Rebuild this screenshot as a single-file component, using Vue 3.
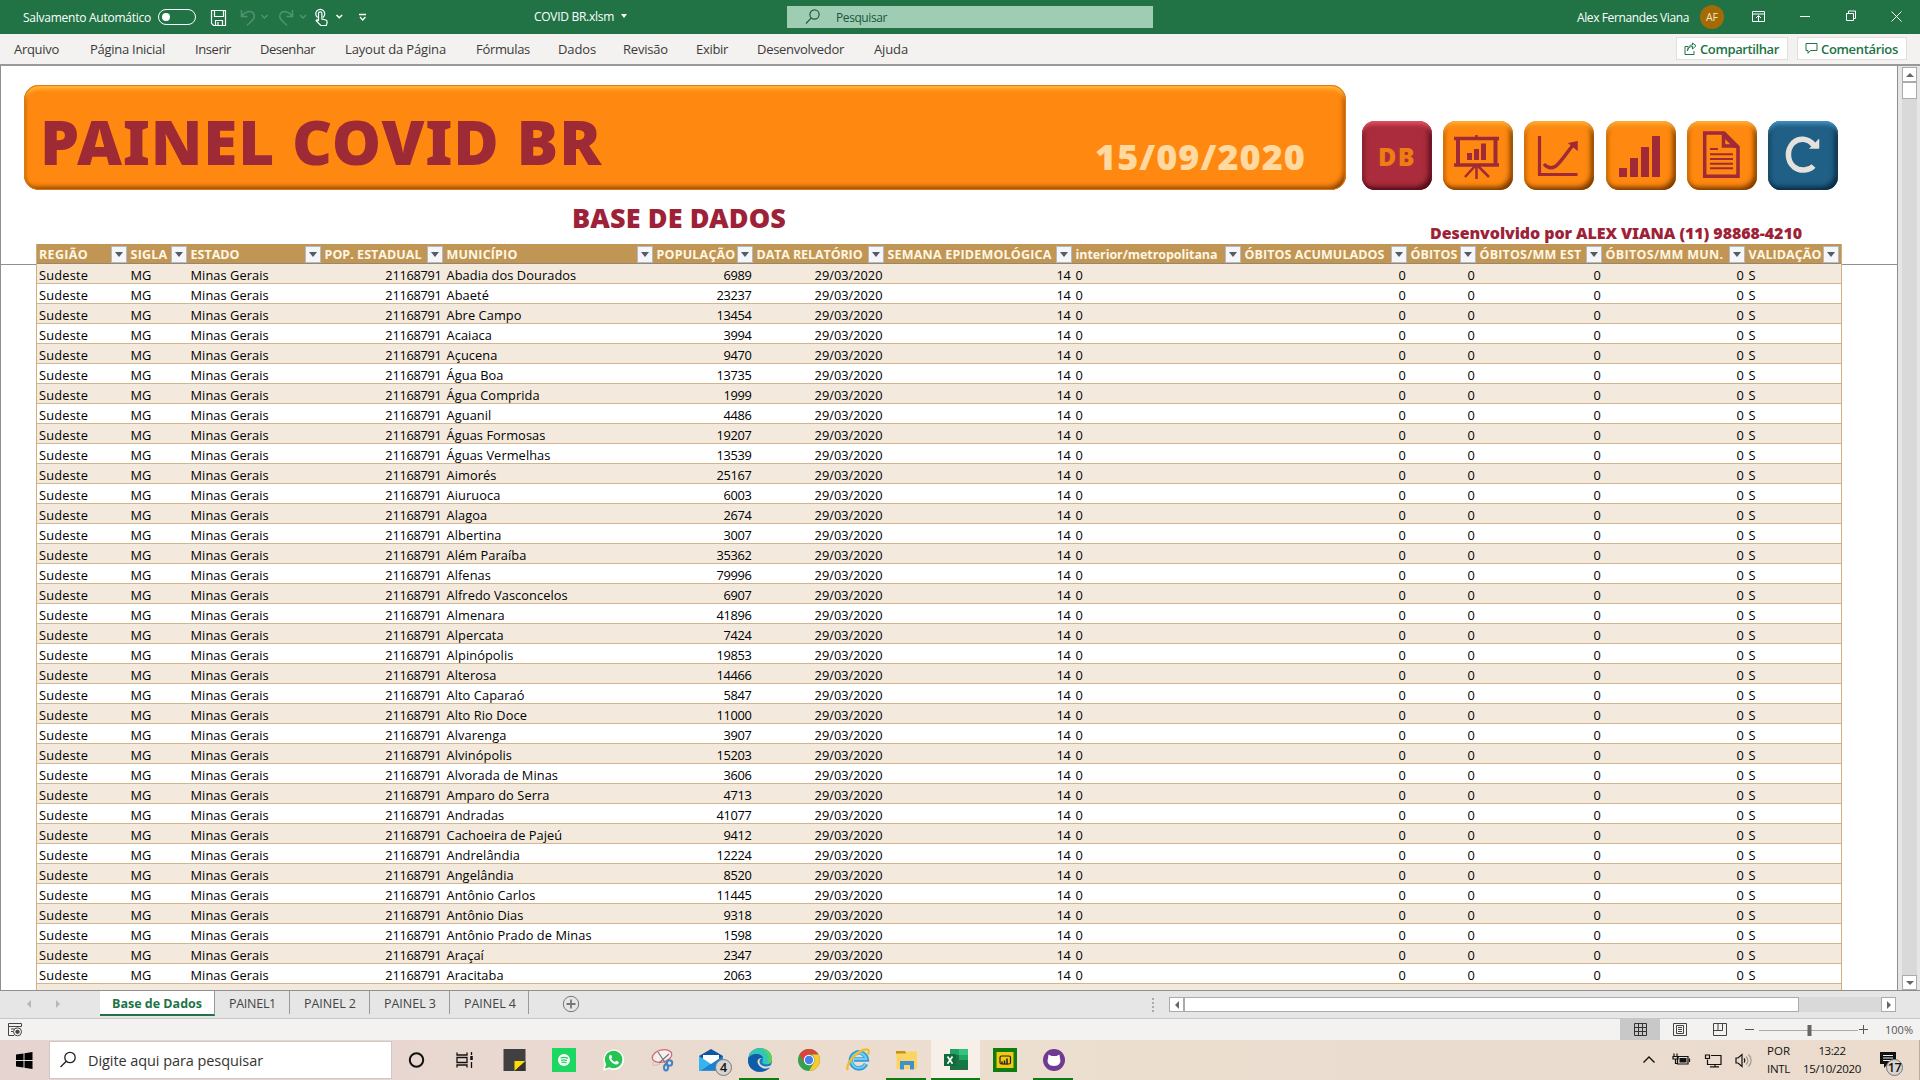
<script setup>
const vFit = {
  mounted(el, { value }) {
    el.style.letterSpacing = '0px'
    const extra = value - el.getBoundingClientRect().width
    el.style.letterSpacing = extra / el.textContent.length + 'px'
  }
}

const menu = [
  { t: 'Arquivo', w: 45, slot: 76 },
  { t: 'Página Inicial', w: 75, slot: 105 },
  { t: 'Inserir', w: 36, slot: 65 },
  { t: 'Desenhar', w: 55, slot: 85 },
  { t: 'Layout da Página', w: 101, slot: 131 },
  { t: 'Fórmulas', w: 54, slot: 82 },
  { t: 'Dados', w: 38, slot: 65 },
  { t: 'Revisão', w: 45, slot: 73 },
  { t: 'Exibir', w: 32, slot: 61 },
  { t: 'Desenvolvedor', w: 87, slot: 117 },
  { t: 'Ajuda', w: 34, slot: 40 }
]

const columns = [
  { t: 'REGIÃO', w: 92, tw: 49 },
  { t: 'SIGLA', w: 60, tw: 37 },
  { t: 'ESTADO', w: 134, tw: 49 },
  { t: 'POP. ESTADUAL', w: 122, tw: 97 },
  { t: 'MUNICÍPIO', w: 210, tw: 71 },
  { t: 'POPULAÇÃO', w: 100, tw: 79 },
  { t: 'DATA RELATÓRIO', w: 131, tw: 106 },
  { t: 'SEMANA EPIDEMOLÓGICA', w: 188, tw: 164 },
  { t: 'interior/metropolitana', w: 169, tw: 142 },
  { t: 'ÓBITOS ACUMULADOS', w: 166, tw: 140 },
  { t: 'ÓBITOS', w: 69, tw: 47 },
  { t: 'ÓBITOS/MM EST', w: 126, tw: 102 },
  { t: 'ÓBITOS/MM MUN.', w: 143, tw: 118 },
  { t: 'VALIDAÇÃO', w: 95, tw: 73 }
]

const cities = [
  ['Abadia dos Dourados', 6989], ['Abaeté', 23237], ['Abre Campo', 13454], ['Acaiaca', 3994],
  ['Açucena', 9470], ['Água Boa', 13735], ['Água Comprida', 1999], ['Aguanil', 4486],
  ['Águas Formosas', 19207], ['Águas Vermelhas', 13539], ['Aimorés', 25167], ['Aiuruoca', 6003],
  ['Alagoa', 2674], ['Albertina', 3007], ['Além Paraíba', 35362], ['Alfenas', 79996],
  ['Alfredo Vasconcelos', 6907], ['Almenara', 41896], ['Alpercata', 7424], ['Alpinópolis', 19853],
  ['Alterosa', 14466], ['Alto Caparaó', 5847], ['Alto Rio Doce', 11000], ['Alvarenga', 3907],
  ['Alvinópolis', 15203], ['Alvorada de Minas', 3606], ['Amparo do Serra', 4713], ['Andradas', 41077],
  ['Cachoeira de Pajeú', 9412], ['Andrelândia', 12224], ['Angelândia', 8520], ['Antônio Carlos', 11445],
  ['Antônio Dias', 9318], ['Antônio Prado de Minas', 1598], ['Araçaí', 2347], ['Aracitaba', 2063]
]

const rows = cities.map(([name, pop]) => [
  'Sudeste', 'MG', 'Minas Gerais', '21168791', name, pop, '29/03/2020', '14', '0', '0', '0', '0', '0', 'S'
])
rows.push(columns.map(() => ''))
const numeric = [3, 5, 6, 7, 9, 10, 11, 12]

const sheets = [
  { t: 'PAINEL1', w: 47, slot: 75 },
  { t: 'PAINEL 2', w: 52, slot: 80 },
  { t: 'PAINEL 3', w: 52, slot: 80 },
  { t: 'PAINEL 4', w: 52, slot: 79 }
]
</script>

<template>
  <div class="screen">
    <header class="titlebar">
      <div class="autosave"><span v-fit="128">Salvamento Automático</span></div>
      <span class="toggle"><i></i></span>
      <svg class="quick" width="170" height="34" viewBox="0 0 170 34" fill="none" stroke="#fff" stroke-width="1.2">
        <path d="M12.5 10.5h14v15h-12l-2-2zM15.5 10.5v6h9v-6M16.500 25.500v-5h7v5M19 22v3" />
        <g stroke="#4f9370" stroke-width="1.5">
          <path d="M42.500 10v6.500h6M43 16c3-5 10-6 12-1.500s-4 7.500-7 11" />
          <path d="M62.500 15l3 3 3-3" />
          <path d="M93.500 10v6.500h-6M93 16c-3-5-10-6-12-1.500s4 7.500 7 11" />
          <path d="M101 15l3 3 3-3" />
        </g>
        <path d="M118.500 17.500a4.500 4.500 0 1 1 5.500 0M119.500 21v-7.500a1.700 1.700 0 0 1 3.400 0v5.500l4 1c1.400.5 1.300 1.500 1.200 2.500l-.8 3h-5.500l-4.500-4.500c-.5-1.500 1-1.700 2.200 0" />
        <path d="M137.500 15l2.800 2.800 2.800-2.800" stroke-width="1.500" />
        <path d="M160 14.500h7M161 17l2.700 3 2.700-3" stroke-width="1.300" />
      </svg>
      <div class="doc"><span v-fit="80">COVID BR.xlsm</span><i class="caret"></i></div>
      <div class="search">
        <svg width="16" height="16" viewBox="0 0 16 16" fill="none" stroke="#1b5e3a" stroke-width="1.200"><circle cx="9.500" cy="5.500" r="4.600" /><path d="M6.300 8.800L1 14.500" /></svg>
        <span v-fit="51">Pesquisar</span>
      </div>
      <div class="user"><span v-fit="112">Alex Fernandes Viana</span></div>
      <span class="avatar">AF</span>
      <svg class="winbtns" width="196" height="34" viewBox="0 0 196 34" fill="none" stroke="#fff">
        <path d="M28.500 11.500h12v10h-12zM28.500 14h12M34.500 21v-5M32 18l2.500-2.500L37 18" />
        <path d="M76 16.500h10" />
        <path d="M122.500 13.500h7v7h-7zM124.500 13v-2h7v7.500h-2" />
        <path d="M167.500 11.500l10 10M177.500 11.500l-10 10" />
      </svg>
    </header>

    <nav class="menu">
      <div v-for="m in menu" :key="m.t" class="mitem" :style="{ width: m.slot + 'px' }"><span v-fit="m.w">{{ m.t }}</span></div>
      <div class="mbtns">
        <div class="mbtn">
          <svg width="13" height="13" viewBox="0 0 13 13" fill="none" stroke="#217346"><path d="M4 4.500H1v8h9V9M3.500 9c.5-3 2-4.500 5-4.500V7L12 3.700 8.500 1v2C5 3 3.500 5.500 3.500 9z" /></svg>
          <span v-fit="79">Compartilhar</span>
        </div>
        <div class="mbtn">
          <svg width="13" height="13" viewBox="0 0 13 13" fill="none" stroke="#217346"><path d="M1 1.500h11v7H5.500L3 11.300V8.500H1z" /></svg>
          <span v-fit="77">Comentários</span>
        </div>
      </div>
    </nav>

    <main class="work">
      <section class="sheet">
        <div class="top">
          <div class="banner">
            <span class="h1"><span v-fit="562">PAINEL COVID BR</span></span>
            <span class="date"><span v-fit="211">15/09/2020</span></span>
          </div>
          <div class="actions">
            <div class="act red"><span v-fit="38">DB</span></div>
            <div class="act">
              <svg width="70" height="69" viewBox="0 0 70 69" fill="none" stroke="#a02a36" stroke-width="3">
                <path d="M11 17.500h45M11 44h45" stroke-width="3.500" /><path d="M15 17v27M52.500 17v27" stroke-width="4" />
                <path d="M33.500 14v3M33.500 44v14" stroke-width="2.500" /><path d="M32 45L22 56M35 45l11 11" stroke-width="2.500" />
                <path d="M24 32h5v7h-5zM31 28h5v11h-5zM38 22.500h5V39h-5z" fill="#a02a36" stroke="none" />
              </svg>
            </div>
            <div class="act">
              <svg width="70" height="69" viewBox="0 0 70 69" fill="none" stroke="#a02a36" stroke-width="3.500">
                <path d="M15.500 15v39M14 53.500h39.500" stroke-width="3.200" /><path d="M20 43c4 5 10 5 14 0 6-6 10-13 15-19" /><path d="M45.500 22.500L53 21v7.500z" fill="#a02a36" stroke-width="1.500" />
              </svg>
            </div>
            <div class="act">
              <svg width="70" height="69" viewBox="0 0 70 69" fill="#a02a36"><path d="M13 47h8v9h-8zM24 37h8v19h-8zM35 26h8v30h-8zM46 15h8v41h-8z" /></svg>
            </div>
            <div class="act">
              <svg width="70" height="69" viewBox="0 0 70 69" fill="none" stroke="#a02a36" stroke-width="3.500">
                <path d="M17.700 12H37l14 14v29.300H17.700zM36.500 12v13h13" /><path d="M36 11l16 16h-5L36 16z" fill="#a02a36" stroke="none" />
                <path d="M23 28h8M23 33.200h23M23 38h23M23 42.700h23M23 47.200h23" stroke-width="2" />
              </svg>
            </div>
            <div class="act blue">
              <svg width="70" height="69" viewBox="0 0 70 69" fill="none" stroke="#e5e1dd" stroke-width="5.500">
                <path d="M45.500 24C40 17 31 16.500 25 22c-6.500 7-6 18 1 24 6 4.500 15 4 19.500-1" /><path d="M51 18v9.500H41.500z" fill="#e5e1dd" stroke-width="0.500" />
              </svg>
            </div>
          </div>
        </div>
        <div class="captions">
          <div class="base"><span v-fit="214">BASE DE DADOS</span></div>
          <div class="dev"><span v-fit="372">Desenvolvido por ALEX VIANA (11) 98868-4210</span></div>
        </div>
        <div class="grid">
          <table>
            <colgroup><col v-for="c in columns" :key="c.t" :style="{ width: c.w + 'px' }" /></colgroup>
            <thead>
              <tr>
                <th v-for="c in columns" :key="c.t"><div class="hcell"><span v-fit="c.tw">{{ c.t }}</span><i class="filter"></i></div></th>
              </tr>
            </thead>
            <tbody>
              <tr v-for="(r, i) in rows" :key="i">
                <td v-for="(v, j) in r" :key="j" :class="{ num: numeric.includes(j), day: j === 6, wide: j === 0 }"><div class="cell">{{ v }}</div></td>
              </tr>
            </tbody>
          </table>
        </div>
      </section>
      <aside class="vscroll"><i class="sb"><b class="up"></b></i><i class="vthumb"></i><i class="sb last"><b class="down"></b></i></aside>
    </main>

    <section class="tabs">
      <div class="tabnav"><b class="left pale"></b><b class="right pale"></b></div>
      <div class="tab on"><span v-fit="90">Base de Dados</span></div>
      <div v-for="s in sheets" :key="s.t" class="tab" :style="{ width: s.slot + 'px' }"><span v-fit="s.w">{{ s.t }}</span></div>
      <svg class="plus" width="18" height="18" viewBox="0 0 18 18" fill="none" stroke="#777"><circle cx="9" cy="9" r="7.700" /><path d="M4.500 9h9M9 4.500v9" stroke-width="1.800" /></svg>
      <div class="hscroll"><span class="dots"><u></u><u></u><u></u><u></u></span><i class="sb"><b class="left"></b></i><i class="hthumb"></i><i class="htrack"></i><i class="sb"><b class="right"></b></i></div>
    </section>

    <section class="status">
      <svg class="macro" width="15" height="14" viewBox="0 0 15 14" fill="none" stroke="#444"><path d="M6 12.500H.5v-12h13v3M.5 3.500h13M3 6h3M3 8.500h2" /><circle cx="9.500" cy="8.800" r="4" /><circle cx="9.500" cy="8.800" r="1.700" fill="#444" /></svg>
      <div class="views">
        <span class="view sel"><svg width="13" height="13" viewBox="0 0 13 13" fill="none" stroke="#333"><path d="M.5.500h12v12H.500zM4.500.500v12M8.500.500v12M.5 4.500h12M.5 8.500h12" /></svg></span>
        <span class="view"><svg width="14" height="13" viewBox="0 0 14 13" fill="none" stroke="#444"><path d="M.5.500h13v12H.500zM3.500 2.500h7v8h-7zM5 4.500h4M5 6.500h4M5 8.500h4" /></svg></span>
        <span class="view"><svg width="14" height="13" viewBox="0 0 14 13" fill="none" stroke="#444"><path d="M.5.500h13v12H.500zM5 .5v7h4.500v-7M.5 7.500H5" /></svg></span>
        <svg class="zoomer" width="130" height="20" viewBox="0 0 130 20" fill="none" stroke="#555"><path d="M5 9.500h9M128 9.500h-9M123.500 5v9" /><path d="M19 10.500h99" stroke="#aaa" /><path d="M69.500 5v11" stroke-width="4" stroke="#666" /></svg>
        <span class="pct"><span v-fit="28">100%</span></span>
      </div>
    </section>

    <footer class="taskbar">
      <div class="start"><svg width="18" height="17" viewBox="0 0 18 17"><path d="M0 2.500l7.500-1V8H0zM8.500 1.300L16.500 0v8h-8zM0 9h7.500v6.500L0 14.500zM8.500 9h8v8l-8-1.300z" /></svg></div>
      <div class="tsearch">
        <svg width="18" height="18" viewBox="0 0 18 18" fill="none" stroke="#222" stroke-width="1.300"><circle cx="11" cy="6.500" r="5.200" /><path d="M7.300 10.300L1.500 16" /></svg>
        <span v-fit="175">Digite aqui para pesquisar</span>
      </div>
      <div class="apps">
        <div class="app"><svg viewBox="0 0 26 26"><circle cx="12.500" cy="13" r="6.700" fill="none" stroke="#111" stroke-width="2" /></svg></div>
        <div class="app"><svg viewBox="0 0 26 26" fill="none" stroke="#111" stroke-width="1.300"><path d="M4 5.500V8h10V5.500M4 20.500V18h10v2.500M4 10.500h10v5H4zM18.500 5v3M18.500 15v6" /><path d="M18.500 9v4" stroke-width="2.500" /></svg></div>
        <div class="app"><svg viewBox="0 0 26 26"><path d="M1.500 2h22v22h-22z" fill="#404040" /><path d="M12.500 14h11l-11 10z" fill="#fd0" /><path d="M23.500 14v10h-11z" fill="#333" /></svg></div>
        <div class="app"><svg viewBox="0 0 26 26"><path d="M1 1h24v24H1z" fill="#1ed760" /><circle cx="13" cy="13" r="6" fill="#fff" /><path d="M9.500 11c2.500-1 5-.8 7.500.4M10 13.300c2-.7 4-.5 6 .4M10.500 15.400c2-.5 3.300-.4 5 .4" fill="none" stroke="#1ed760" stroke-width="1.300" /></svg></div>
        <div class="app"><svg viewBox="0 0 26 26"><path d="M3 23.500l1.500-6A10.300 10.300 0 1 1 9 22z" fill="#fff" /><path d="M5 21.500l1.200-4.200A8.800 8.800 0 1 1 9.500 20.300z" fill="#25c454" /><path d="M10 8c-2 2-.5 5 1.500 7s5 3.500 7 1.500c.6-1 .4-1.500-.5-2l-1.800-.8-1.400 1.300c-2-.8-3-2-3.600-3.500l1-1.300-1-2.200z" fill="#fff" /></svg></div>
        <div class="app"><svg viewBox="0 0 26 26"><ellipse cx="13" cy="9" rx="10" ry="6" transform="rotate(-15 13 9)" fill="#f7eef0" stroke="#d66a73" stroke-width="1.300" /><path d="M5 15c-5 4 2 4 6 2" stroke="#ddb6b6" fill="none" /><path d="M9 5l8 12M20 7L10 16" stroke="#777" stroke-width="1.200" /><circle cx="20.500" cy="16" r="2.700" fill="none" stroke="#3e84c6" stroke-width="2" /><ellipse cx="17" cy="20.500" rx="2" ry="3" fill="none" stroke="#3e84c6" stroke-width="2" /></svg></div>
        <div class="app"><svg viewBox="0 0 26 26"><path d="M1 9l12-7 12 7v14.500H1z" fill="#0b57a4" /><path d="M5 8h16v9H5z" fill="#fff" /><path d="M1 9l12 8-9 6.500H1z" fill="#37b4ee" /><path d="M25 9l-12 8-10 6.500h22z" fill="#1683d4" /></svg><span class="badge">4</span></div>
        <div class="app run"><svg viewBox="0 0 26 26"><circle cx="13" cy="13" r="12" fill="#1579cb" /><path d="M1.500 11C3 4 8 1 13 1c7 0 12 5 12 11 0 4-4 6-8 5-3-1-1-2-1-5 0-5-8-8-14.500-1z" fill="#36c5b5" /><path d="M1 13c1-7 13-8 15-2-6-1-7 5-3 9 3 3 7 2.500 10.500 0C18 27 1 27 1 13z" fill="#0f5ca8" /><path d="M16 11c-4 0-5 5-1 7.500 3 2 6 1 9-.5l-1 2.500c-4 2-9 1-11.500-3S11.500 10.500 16 11z" fill="#ebddd2" /><path d="M13 1c7 0 12 5 12 11 0 3-2 5-5 5.200C24 11 20 3 13 1z" fill="#5ad45a" /></svg></div>
        <div class="app"><svg viewBox="0 0 26 26"><circle cx="13" cy="13" r="11" fill="#34a050" /><path d="M3.500 7.500A11 11 0 0 1 22.500 7.500H13L8 15.500z" fill="#d9453a" /><path d="M22.500 7.500A11 11 0 0 1 13 24l5-8.500c1-2.500.5-6-2.500-8z" fill="#fbc82d" /><circle cx="13" cy="13" r="5.200" fill="#fff" /><circle cx="13" cy="13" r="4.200" fill="#4381ed" /></svg></div>
        <div class="app"><svg viewBox="0 0 26 26" fill="none"><path d="M21 17a8 8 0 1 1 .8-4.500H9" stroke="#2d9fdd" stroke-width="4.500" /><path d="M20.500 17a7.500 7.500 0 1 1 .8-5H9" stroke="#75ccf2" stroke-width="1.800" /><path d="M3 23C-1 19 12 2 22 2.500c2.500.5 2 3 1 5" stroke="#f0bf2e" stroke-width="2.300" /></svg></div>
        <div class="app run"><svg viewBox="0 0 26 26"><path d="M2 4h9l2 3h-11z" fill="#c9930f" /><path d="M2.500 6.500h9l2-2H23V22H2.500z" fill="#fcd462" /><path d="M6 14h14v8.500h-4V18h-6v4.500H6z" fill="#3e91d0" /></svg></div>
        <div class="app run active"><svg viewBox="0 0 26 26"><path d="M7 2h18v21H7z" fill="#1e7145" /><path d="M7 2h9v6H7z" fill="#21a366" /><path d="M16 2h9v6h-9z" fill="#33c481" /><path d="M16 8h9v5h-9z" fill="#24a567" /><path d="M16 13h9v5h-9z" fill="#107c41" /><path d="M1 7h12v12H1z" fill="#0f6b39" /><path d="M4.500 9.500l5 7.200M9.500 9.500l-5 7.200" stroke="#fff" stroke-width="1.700" /></svg></div>
        <div class="app"><svg viewBox="0 0 26 26"><path d="M1 1h24v24H1z" fill="#107c10" /><path d="M4.500 5h17v16h-17z" fill="#f2c811" /><rect x="8" y="9" width="10.500" height="8" rx="1.500" fill="none" stroke="#222" stroke-width="1.200" /><path d="M10 17v-2.500M12.500 17.500v-4M15 17.500v-6" stroke="#222" stroke-width="1.500" /></svg></div>
        <div class="app run"><svg viewBox="0 0 26 26"><circle cx="13" cy="13" r="11" fill="#6e3a94" /><path d="M7.500 7.500l3 1.500h5l3-1.500.5 4c1.500 4-1 7.500-6 7.500s-7.500-3.500-6-7.500z" fill="#fff" /></svg></div>
      </div>
      <div class="tray">
        <svg width="120" height="40" viewBox="0 0 120 40" fill="none" stroke="#111" stroke-width="1.200">
          <path d="M5.500 22.500l5.500-5.500 5.500 5.500" stroke-width="1.400" />
          <path d="M39.500 16.500h10.500v7.500H39.500z" /><path d="M41.500 18h7v4.500h-7z" fill="#111" stroke="none" /><path d="M51.500 18.500v3.500M36 13.500v2.500M39 13.500v2.500M35 16.500h5v2.500h-5zM37.500 19v4.500h2" />
          <path d="M73 15.500h10v9H69.500v-5M67.500 15h4v3.500h-4zM77 25v2M72 26.800h9" />
          <path d="M98 18h2l4-3.500v12l-4-3.500h-2z" /><path d="M106 18.500c1 1 1 3 0 4" /><path d="M108 16.500c2.500 2 2.500 6 0 8M110.500 14.500c3.500 3.500 3.500 8.500 0 12" stroke="#a09890" />
        </svg>
        <div class="lang"><span v-fit="23">POR</span><span v-fit="23">INTL</span></div>
        <div class="clock"><span v-fit="27">13:22</span><span v-fit="58">15/10/2020</span></div>
        <div class="notif"><svg width="18" height="18" viewBox="0 0 18 18"><path d="M0 0h16v12H8l-4 4v-4H0z" fill="#111" /><path d="M3 3.500h10M3 6h10M3 8.500h10" stroke="#eee" /></svg><span class="badge">17</span></div>
      </div>
    </footer>
  </div>
</template>

<style>
body { margin: 0; overflow: hidden; }
</style>

<style scoped>
.screen { width: 1920px; height: 1080px; display: flex; flex-direction: column; font-family: "Open Sans", "Noto Sans", sans-serif; font-size: 12px; background: #fff; overflow: hidden; white-space: nowrap; }
.screen * { box-sizing: border-box; }
svg { display: block; flex: none; }
span { display: inline-block; }
.titlebar { height: 34px; flex: none; display: flex; align-items: center; background: #217346; color: #fff; }
.autosave { width: 158px; padding-left: 23px; }
.toggle { width: 38px; height: 16px; border: 1px solid #fff; border-radius: 8px; display: flex; align-items: center; padding-left: 3px; }
.toggle i { width: 8px; height: 8px; border-radius: 50%; background: #fff; }
.quick { margin-left: 3px; }
.doc { width: 253px; margin-left: 165px; display: flex; align-items: center; gap: 7px; padding-bottom: 2px; }
.caret { border: 3px solid transparent; border-top: 4px solid #fff; border-bottom: 0; }
.search { width: 366px; height: 22px; background: #9fcdb4; color: #16593a; display: flex; align-items: center; padding-left: 18px; gap: 15px; }
.user { width: 547px; display: flex; justify-content: flex-end; padding-right: 11px; }
.avatar { width: 24px; height: 24px; border-radius: 50%; background: #a36a06; color: #f6e7c7; font-size: 10.500px; line-height: 24px; text-align: center; }
.menu { height: 32px; flex: none; display: flex; align-items: center; padding: 0 13px 2px 14px; background: #f3f2f1; border-bottom: 2px solid #999; color: #3b3a39; font-size: 13px; }
.mitem { flex: none; padding-top: 2px; }
.mbtns { margin-left: auto; display: flex; gap: 9px; padding-top: 1px; }
.mbtn { height: 23px; width: 112px; background: #fff; border: 1px solid #e1dfdd; display: flex; align-items: center; padding-left: 7px; gap: 3px; color: #217346; font-weight: 600; }
.mbtn + .mbtn { width: 110px; }
.work { height: 924px; flex: none; display: flex; background: #e6e6e6; }
.sheet { width: 1898px; height: 924px; overflow: hidden; background: #fff; border-left: 1px solid #8f8f8f; border-right: 1px solid #8f8f8f; }
.top { display: flex; gap: 16px; align-items: flex-end; padding: 19px 0 0 23px; }
.banner { width: 1322px; height: 105px; border-radius: 15px; background: #ff8810; display: flex; justify-content: space-between; box-shadow: inset 0 0 0 1px #e07a10, inset 0 5px 4px -1px #ffb83c, inset -4px -5px 5px -2px #8a4300, inset 4px 0 3px -2px #b86000; }
.h1, .date, .red, .captions { font-family: "Noto Sans", "Open Sans", sans-serif; font-weight: 900; }
.h1 { font-size: 62px; line-height: 86px; color: #9e2a35; padding: 13px 0 0 16px; }
.date { font-size: 36px; line-height: 50px; color: #ffd9a0; padding: 47px 40px 0 0; }
.actions { display: flex; gap: 11.200px; }
.act { width: 70px; height: 69px; border-radius: 13px; background: #ff8810; box-shadow: inset 0 5px 4px -2px #ffb03a, inset -4px -4px 5px -1px #7a3b00, inset 4px 0 4px -2px #b86000; }
.red { background: #ab2c3c; color: #ee7d13; font-size: 25px; line-height: 34px; padding: 18px 0 0 16px; box-shadow: inset 0 5px 4px -2px #e85266, inset -4px -4px 5px -1px #4f0c18, inset 4px 0 4px -2px #751825; }
.blue { background: #205f86; box-shadow: inset 0 5px 4px -2px #4692c4, inset -4px -4px 5px -1px #092a42, inset 4px 0 4px -2px #123f5c; }
.captions { height: 54px; display: flex; justify-content: space-between; color: #9e2237; }
.base { padding: 10px 0 0 571px; font-size: 27px; line-height: 36px; }
.dev { padding: 32px 95px 0 0; font-size: 16px; line-height: 22px; }
.grid { background: linear-gradient(#909090, #909090) 0 20px / 100% 1px no-repeat; padding-left: 35px; height: 746px; overflow: hidden; }
table { table-layout: fixed; width: 1805px; border-collapse: collapse; border-spacing: 0; font-size: 12.800px; color: #000; border-right: 1px solid #cfae7f; border-left: 1px solid #cfae7f; }
th, td { padding: 0; height: 20px; text-align: left; font-weight: normal; }
.hcell { height: 20px; line-height: 18px; display: flex; align-items: center; justify-content: space-between; padding: 0 2px 0 2px; background: #c19655; color: #fff6e4; font-weight: 700; font-size: 12.500px; border-bottom: 1px solid #96876f; }
.hcell span { padding-top: 2px; }
.filter { width: 16px; height: 17px; margin-top: 1px; flex: none; background: #f4f6f9; border: 1px solid #b5b9c2; display: flex; align-items: center; justify-content: center; }
.filter::after { content: ""; border: 4px solid transparent; border-top: 5px solid #555b63; border-bottom: 0; }
.cell { height: 20px; line-height: 19px; border-bottom: 1px solid #d4b68c; padding: 2px 3px 0 2px; letter-spacing: 0.080px; }
.num .cell { text-align: right; letter-spacing: -0.300px; }
.day .cell { letter-spacing: 0; }
.wide .cell { letter-spacing: 0.200px; }
tbody tr:nth-child(odd) { background: #f3eadd; }
.vscroll { width: 15px; margin: 1px 0 0 4px; height: 923px; background: #d9d9d9; display: flex; flex-direction: column; }
.sb { width: 15px; height: 15px; flex: none; background: #fff; border: 1px solid #ababab; display: flex; align-items: center; justify-content: center; }
.last { margin-top: auto; }
.vthumb { width: 15px; height: 17px; background: #fff; border: 1px solid #ababab; }
b { display: block; border: 4px solid transparent; }
.up { border-bottom: 4px solid #666; border-top: 0; }
.down { border-top: 4px solid #666; border-bottom: 0; }
.left { border-right: 4px solid #666; border-left: 0; }
.right { border-left: 4px solid #666; border-right: 0; }
.pale.left { border-right-color: #b8b8b8; }
.pale.right { border-left-color: #b8b8b8; }
.tabs { height: 29px; flex: none; display: flex; background: #e6e6e6; border-top: 1px solid #8f8f8f; border-bottom: 1px solid #c6c6c6; color: #444; font-size: 12.500px; }
.tabnav { width: 100px; display: flex; align-items: flex-start; gap: 25px; padding: 9px 0 0 27px; }
.tab { height: 23px; margin-top: 0; line-height: 26px; padding-left: 14px; border-right: 1px solid #999; }
.tab.on { width: 115px; height: 25px; padding-left: 12px; background: #fff; color: #217346; font-weight: 700; border-bottom: 2px solid #217346; line-height: 26px; }
.plus { margin: 4px 0 0 33px; }
.hscroll { margin-left: auto; margin-right: 24px; padding-top: 6px; display: flex; }
.dots { width: 17px; padding-top: 1px; }
.dots u { display: block; width: 2px; height: 2px; margin-bottom: 2px; background: #aaa; }
.hthumb { width: 615px; height: 15px; background: #fff; border: 1px solid #ababab; }
.htrack { width: 82px; height: 15px; background: #d9d9d9; }
.status { height: 21px; flex: none; display: flex; background: #f3f2f1; color: #555; }
.macro { margin: 4px 0 0 8px; }
.views { margin-left: auto; display: flex; align-items: center; padding-right: 6px; }
.view { width: 40px; height: 21px; display: flex; align-items: center; justify-content: center; }
.sel { background: #c8c8c8; }
.pct { font-size: 11px; width: 44px; padding-left: 15px; }
.taskbar { height: 40px; flex: none; display: flex; color: #111; background: linear-gradient(90deg, #e6d4d1 0, #e8d8d0 25%, #eddfcf 55%, #eadccf 75%, #eadbcd 100%); }
.start { width: 49px; padding: 12px 0 0 16px; }
.tsearch { width: 343px; height: 38px; margin-top: 1px; background: #fff; border: 1px solid #d0c8c4; display: flex; align-items: center; padding-left: 9px; gap: 11px; font-size: 14.500px; color: #333; }
.apps { display: flex; }
.app { width: 49px; height: 40px; display: flex; justify-content: center; align-items: center; position: relative; }
.app svg { width: 26px; height: 26px; }
.run { background: linear-gradient(#107c10, #107c10) 4px 38px / 40px 2px no-repeat; }
.active { background: linear-gradient(#107c10, #107c10) 0 38px / 49px 2px no-repeat, #f6f0e9; }
.badge { position: absolute; left: 29px; top: 19px; width: 17px; height: 17px; border: 1px solid #777; border-radius: 50%; background: #d8d4d0; font-size: 12.500px; line-height: 15px; text-align: center; font-weight: 600; }
.tray { margin-left: auto; display: flex; width: 282px; }
.lang, .clock { display: flex; flex-direction: column; align-items: center; justify-content: center; line-height: 18px; font-size: 11.500px; padding-bottom: 1px; }
.lang { width: 33px; align-items: flex-start; padding-left: 9px; }
.clock { width: 82px; }
.notif { position: relative; padding: 12px 0 0 7px; width: 47px; border-right: 1px solid #b9ada3; }
.notif .badge { left: 13px; top: 19px; letter-spacing: -0.500px; }
</style>
